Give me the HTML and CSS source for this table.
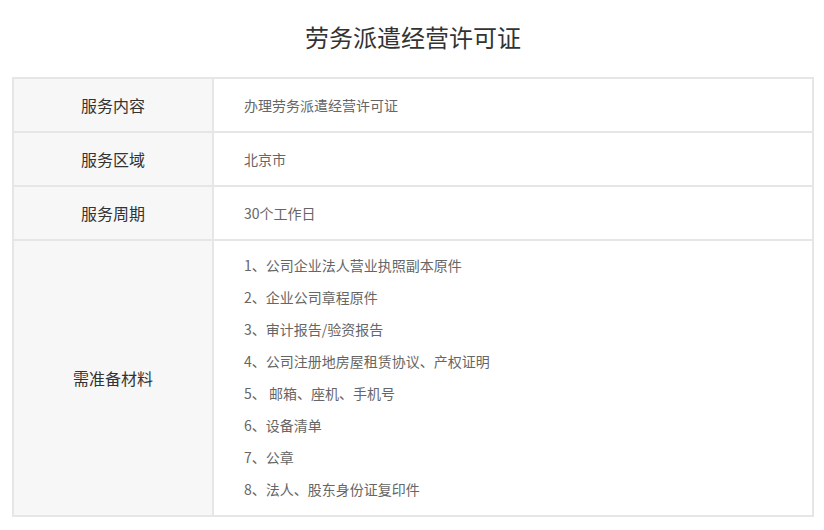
FILE: index.html
```html
<!DOCTYPE html>
<html lang="zh">
<head>
<meta charset="utf-8">
<link rel="stylesheet" href="styles.css">
</head>
<body>
<div class="page">
  <h1 class="title">劳务派遣经营许可证</h1>
  <table class="info">
    <tr>
      <th>服务内容</th>
      <td>办理劳务派遣经营许可证</td>
    </tr>
    <tr>
      <th>服务区域</th>
      <td>北京市</td>
    </tr>
    <tr>
      <th>服务周期</th>
      <td>30个工作日</td>
    </tr>
    <tr>
      <th>需准备材料</th>
      <td class="list-cell">
        <ul class="list">
          <li>1、公司企业法人营业执照副本原件</li>
          <li>2、企业公司章程原件</li>
          <li>3、审计报告/验资报告</li>
          <li>4、公司注册地房屋租赁协议、产权证明</li>
          <li>5、 邮箱、座机、手机号</li>
          <li>6、设备清单</li>
          <li>7、公章</li>
          <li>8、法人、股东身份证复印件</li>
        </ul>
      </td>
    </tr>
  </table>
</div>
</body>
</html>
```

FILE: styles.css
```css
html, body {
  margin: 0;
  padding: 0;
  background: #ffffff;
}
body {
  font-family: "Noto Sans CJK SC", "Noto Sans", sans-serif;
}
.page {
  padding: 0 10px 0 12px;
}
.title {
  margin: 0;
  padding-top: 19px;
  height: 77px;
  box-sizing: border-box;
  text-align: center;
  font-size: 24px;
  line-height: 36px;
  font-weight: normal;
  color: #333333;
}
.info {
  width: 802px;
  border-collapse: collapse;
  border: 2px solid #e6e6e6;
}
.info th, .info td {
  border: 2px solid #e6e6e6;
  height: 54px;
  padding: 0;
  box-sizing: border-box;
}
.info th {
  width: 200px;
  background: #f7f7f7;
  font-weight: normal;
  font-size: 16px;
  color: #333333;
  text-align: center;
}
.info td {
  font-size: 14px;
  color: #666666;
  padding-left: 30px;
  text-align: left;
}
.list {
  list-style: none;
  margin: 0;
  padding: 8px 0 10px 0;
}
.list li {
  height: 32px;
  line-height: 32px;
}
```
